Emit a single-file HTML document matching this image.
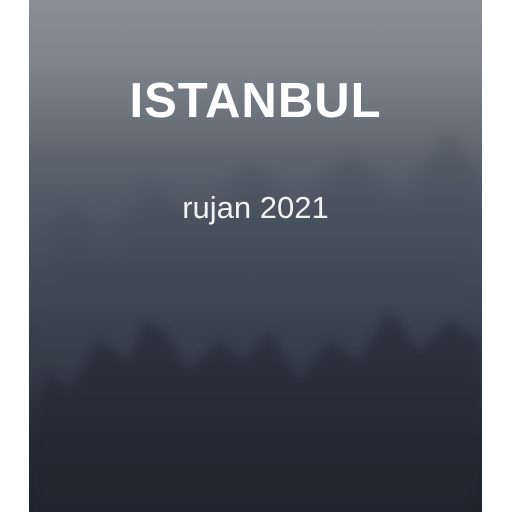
<!DOCTYPE html>
<html><head><style>
html,body{margin:0;padding:0;width:512px;height:512px;background:#fff;overflow:hidden}
.cover{position:absolute;left:29px;top:0;width:453px;height:512px;overflow:hidden;
background:linear-gradient(180deg,#8b8e93 0%,#80848b 12%,#6e747d 22%,#5a626d 32%,#4b5461 44%,#404955 56%,#343c48 68%,#272e38 80%,#1e232c 92%,#1b2029 100%)}
svg{position:absolute;left:0;top:0}
.t{position:absolute;left:0;width:453px;text-align:center;color:#fff;font-family:"Liberation Sans",sans-serif}
.h{top:73px;font-size:49px;font-weight:bold;letter-spacing:1px}
.s{top:190px;font-size:31px;color:#f0f2f4}
</style></head><body>
<div class="cover">
<svg width="453" height="512" viewBox="0 0 453 512">
<defs><filter id="b"><feGaussianBlur stdDeviation="5"/></filter><filter id="b2"><feGaussianBlur stdDeviation="8"/></filter></defs>
<g filter="url(#b2)" fill="#3e4753" opacity="0.3">
<polygon points="0,300 40,200 80,260 120,180 170,230 220,160 270,210 320,150 370,200 420,130 453,180 453,512 0,512"/>
</g>
<g filter="url(#b)" fill="#1e242d" opacity="0.45">
<polygon points="0,430 20,370 40,390 70,340 100,360 115,320 135,330 160,370 190,340 215,360 240,330 270,380 300,340 330,360 360,310 390,350 420,320 453,340 453,512 0,512"/>
</g>
</svg>
<div class="t h">ISTANBUL</div>
<div class="t s">rujan 2021</div>
</div>
</body></html>
